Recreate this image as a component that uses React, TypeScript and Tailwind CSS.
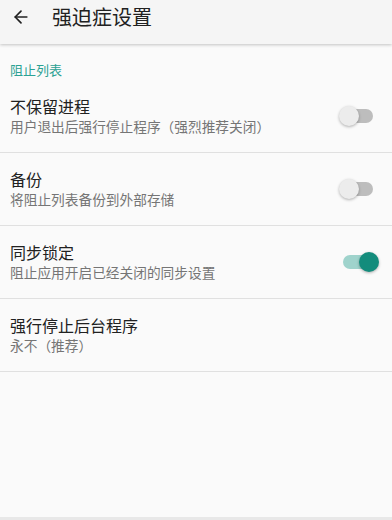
import { ArrowLeft } from "lucide-react";

type Item = {
  title: string;
  summary: string;
  toggle?: boolean;
  checked?: boolean;
};

const items: Item[] = [
  { title: "不保留进程", summary: "用户退出后强行停止程序（强烈推荐关闭）", toggle: true, checked: false },
  { title: "备份", summary: "将阻止列表备份到外部存储", toggle: true, checked: false },
  { title: "同步锁定", summary: "阻止应用开启已经关闭的同步设置", toggle: true, checked: true },
  { title: "强行停止后台程序", summary: "永不（推荐）" },
];

function Switch({ checked }: { checked: boolean }) {
  return (
    <div className="relative w-[36px] h-[20px] flex items-center">
      <div
        className={
          checked
            ? "ml-[4px] w-[30px] h-[14px] rounded-full bg-[#9fd3cc]"
            : "ml-[4px] w-[30px] h-[14px] rounded-full bg-[#bdbdbd]"
        }
      />
      <div
        className={
          checked
            ? "absolute right-[-4px] top-0 w-[20px] h-[20px] rounded-full bg-[#138c7c] shadow-[0_1px_3px_rgba(0,0,0,0.3)]"
            : "absolute left-0 top-0 w-[20px] h-[20px] rounded-full bg-[#ececec] shadow-[0_1px_3px_rgba(0,0,0,0.3)]"
        }
      />
    </div>
  );
}

export default function App() {
  return (
    <div
      className="w-[392px] h-[520px] bg-[#fafafa] flex flex-col overflow-hidden"
      style={{ fontFamily: '"Noto Sans CJK SC", "Noto Sans", sans-serif' }}
    >
      {/* toolbar */}
      <div className="h-[44px] shrink-0 bg-[#f5f5f5] shadow-[0_1px_3px_rgba(0,0,0,0.22)] flex items-start pt-[5px] relative z-10">
        <ArrowLeft className="ml-[11px] mt-[2px] w-[20px] h-[20px] text-[#212121]" strokeWidth={2} />
        <span className="ml-[21px] text-[20px] leading-[24px] text-[#212121]">强迫症设置</span>
      </div>

      {/* section */}
      <div className="pt-[16px] px-[10px] h-[36px] text-[13px] leading-[20px] text-[#2ba193]">阻止列表</div>

      <div className="flex flex-col">
        {items.map((item) => (
          <div key={item.title} className="flex items-center border-b border-[#e0e0e0] py-4 pl-[10px] pr-[13px]">
            <div className="flex-1 flex flex-col">
              <span className="text-[16px] leading-5 text-[#212121]">{item.title}</span>
              <span className="text-[13.7px] leading-5 text-[#757575]">{item.summary}</span>
            </div>
            {item.toggle && (
              <div className="mr-[4px]">
                <Switch checked={!!item.checked} />
              </div>
            )}
          </div>
        ))}
      </div>

      <div className="flex-1" />
      <div className="h-[3px] shrink-0 bg-[#e8e8e8]" />
    </div>
  );
}
